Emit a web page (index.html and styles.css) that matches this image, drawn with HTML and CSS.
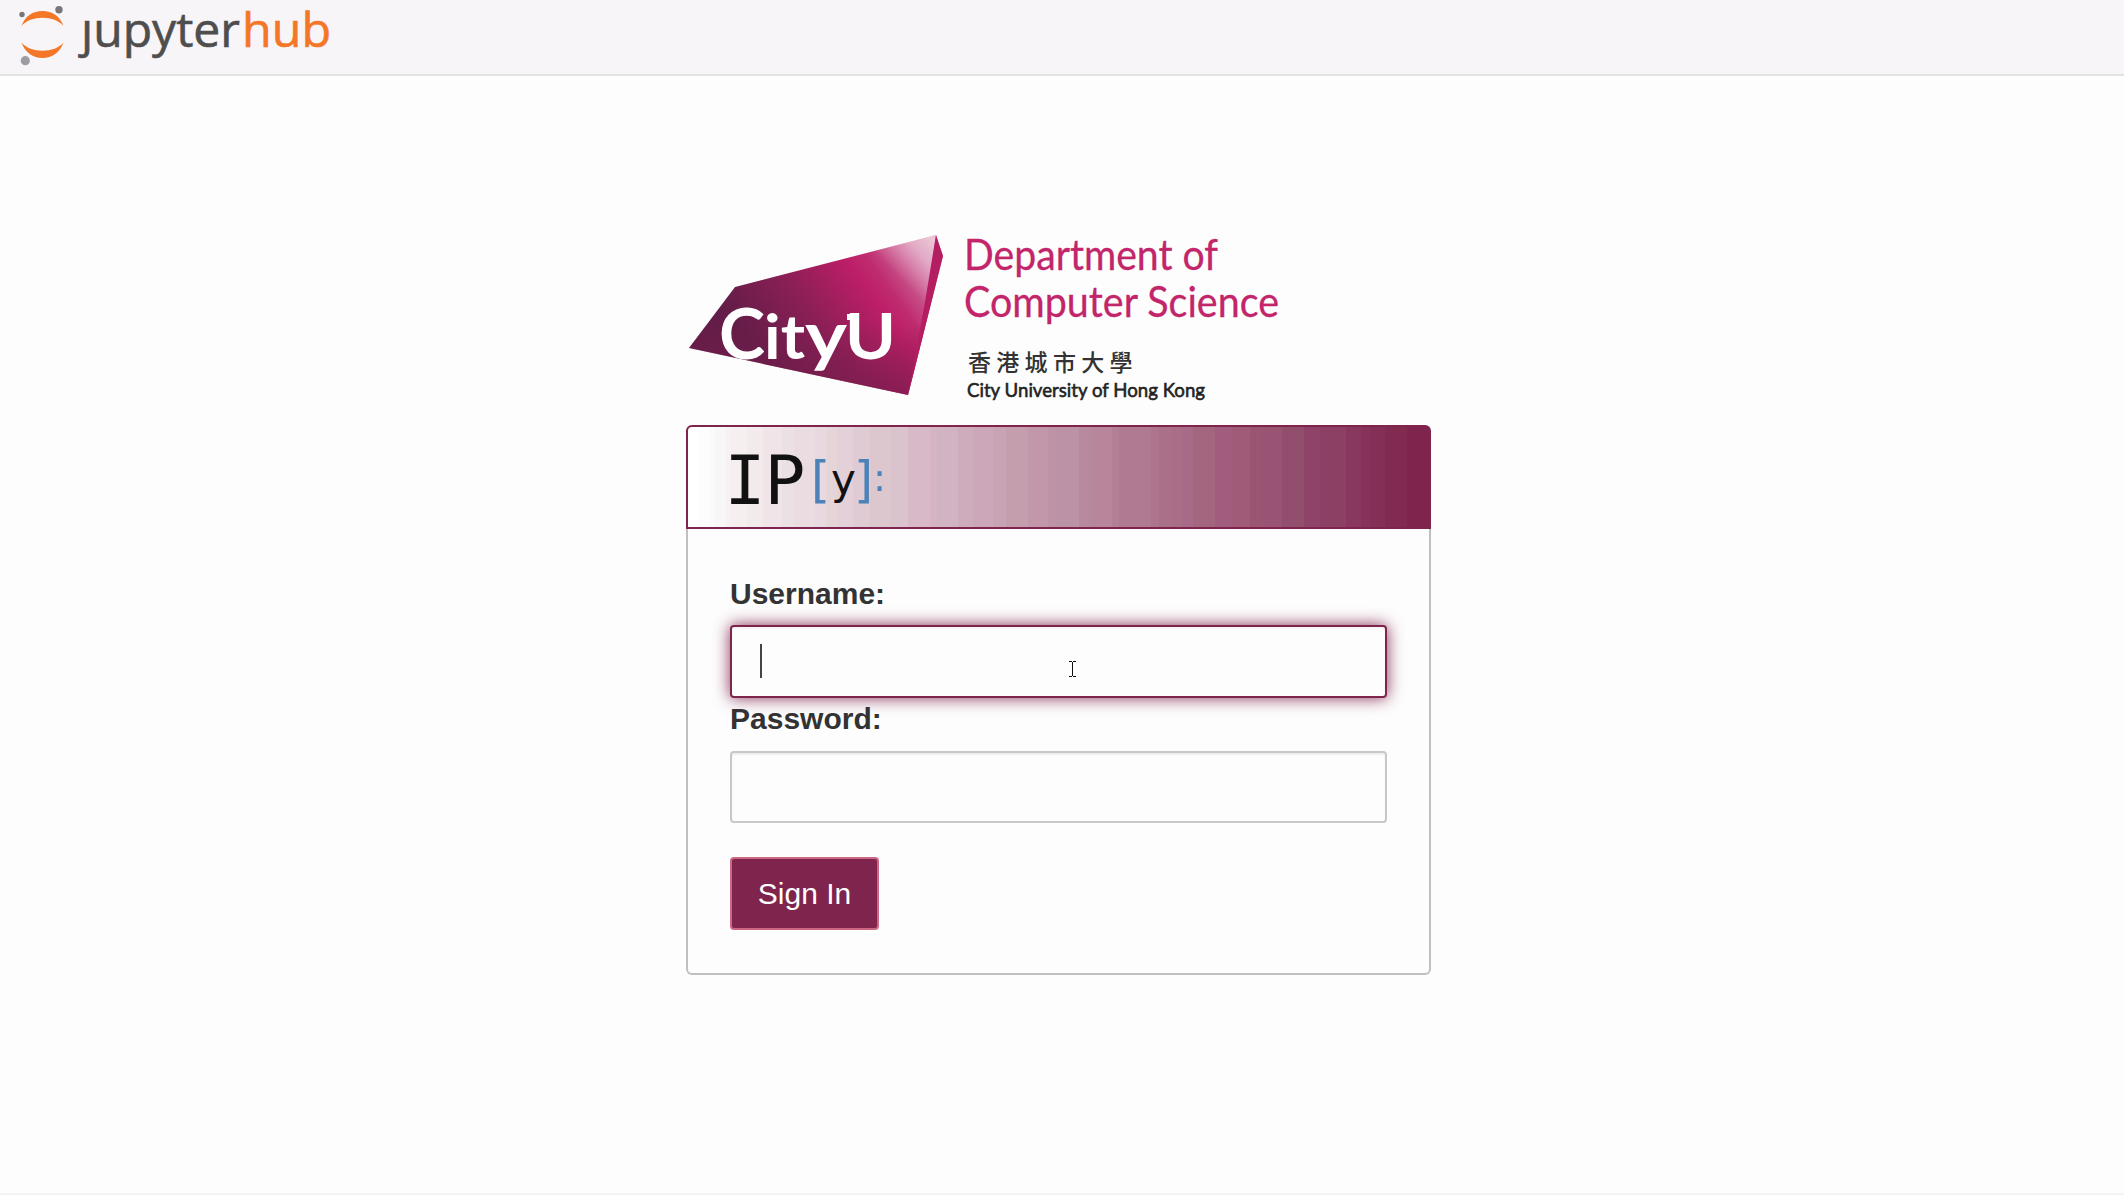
FILE: index.html
```html
<!DOCTYPE html>
<html lang="en">
<head>
<meta charset="utf-8">
<title>JupyterHub</title>
<link rel="stylesheet" href="styles.css">
</head>
<body>
<header class="topbar">
  <svg class="hub-logo" width="350" height="74" viewBox="0 0 350 74" role="img" aria-label="jupyterhub">
    <clipPath id="stem"><path d="M60 19H100V0H350V74H60Z"/></clipPath>
    <path class="orange" d="M21.5 26C25 16 33 11 42.500 11S60 16 63.500 26C59 20.500 51 17.700 42.500 17.700S26 20.500 21.500 26Z"/>
    <path class="orange" d="M21.500 42.500C25 52.500 33 58 42.500 58S60 52.500 63.500 42.500C59 48 51 50.700 42.500 50.700S26 48 21.500 42.500Z"/>
    <circle cx="22" cy="14.500" r="2.700" fill="#77767a"/>
    <circle cx="59" cy="9.800" r="3.700" fill="#77767a"/>
    <circle cx="25.300" cy="60.700" r="4.600" fill="#9c9ea3"/>
    <text class="hub-word" clip-path="url(#stem)" x="81" y="46.500" textLength="159" lengthAdjust="spacingAndGlyphs">jupyter</text>
    <text class="hub-word orange" x="242" y="46.500" textLength="89" lengthAdjust="spacingAndGlyphs">hub</text>
  </svg>
</header>
<main class="page">
  <svg class="dept-logo" width="745" height="190" viewBox="686 225 745 190" role="img" aria-label="CityU Department of Computer Science">
    <defs>
      <linearGradient id="gem" gradientUnits="userSpaceOnUse" x1="760" y1="355" x2="915" y2="245">
        <stop offset="0" stop-color="#641d48"/><stop offset=".35" stop-color="#8b1f56"/><stop offset=".66" stop-color="#bd1e67"/><stop offset=".76" stop-color="#bf2c70"/><stop offset="1" stop-color="#d47fa8"/>
      </linearGradient>
      <linearGradient id="shade" x1="0" y1="0" x2="0" y2="1">
        <stop offset=".55" stop-color="#7b1c4d" stop-opacity="0"/><stop offset="1" stop-color="#7b1c4d" stop-opacity=".65"/>
      </linearGradient>
      <linearGradient id="shine" gradientUnits="userSpaceOnUse" x1="898" y1="276" x2="934" y2="240">
        <stop offset="0" stop-color="#fff" stop-opacity="0"/><stop offset="1" stop-color="#fff" stop-opacity=".55"/>
      </linearGradient>
    </defs>
    <path d="M689 348L735 287L936 235L943 256L908 395Z" fill="url(#gem)"/>
    <path d="M689 348L735 287L936 235L943 256L908 395Z" fill="url(#shade)"/>
    <path d="M862 254L936 235L925 312Z" fill="url(#shine)"/>
    <path d="M936 235L943 256L908 395L925 302Z" fill="#b51d62"/>
    <text class="city-word city-c" x="719" y="359" textLength="46" lengthAdjust="spacingAndGlyphs">C</text>
    <text class="city-word" x="764" y="359" textLength="41" lengthAdjust="spacingAndGlyphs">it</text>
    <text class="city-word city-y" x="805" y="359" textLength="42" lengthAdjust="spacingAndGlyphs">y</text>
    <text class="city-word city-u" x="845" y="359" textLength="51" lengthAdjust="spacingAndGlyphs">U</text>
    <path d="M847 314H857V320H847Z" fill="#fff"/>
    <text class="dept" x="964" y="269.500" textLength="254" lengthAdjust="spacingAndGlyphs">Department of</text>
    <text class="dept" x="964" y="316.500" textLength="315" lengthAdjust="spacingAndGlyphs">Computer Science</text>
    <text class="uni-zh" x="968" y="371">香港城市大學</text>
    <text class="uni-en" x="967" y="396.500" textLength="238" lengthAdjust="spacingAndGlyphs">City University of Hong Kong</text>
  </svg>
  <section class="card">
    <div class="card-head">
      <svg width="200" height="100" viewBox="688 427 200 100" role="img" aria-label="IP[y]:">
        <text class="ipy"><tspan x="724.500" y="503.500">I</tspan><tspan x="764.500">P</tspan><tspan class="ipy-blue" x="811" y="496.500">[</tspan><tspan class="ipy-y" x="831" y="494">y</tspan><tspan class="ipy-blue" x="854" y="496.500">]</tspan><tspan class="ipy-colon" x="873" y="491">:</tspan></text>
      </svg>
    </div>
    <form class="login">
      <label for="user">Username:</label>
      <div class="field focused"><input id="user" type="text"><span class="caret"></span>
        <svg class="pointer" width="7" height="16" viewBox="0 0 7 16"><path d="M0 .5H3M4 .5H7M3.500 1V15M0 15.500H3M4 15.500H7" stroke="#111" fill="none"/></svg>
      </div>
      <label for="pass">Password:</label>
      <div class="field"><input id="pass" type="password"></div>
      <button type="button">Sign In</button>
    </form>
  </section>
</main>
<footer class="bottom-line"></footer>
</body>
</html>
```
FILE: styles.css
```css
* { box-sizing: border-box; }
body {
  margin: 0;
  height: 1195px;
  display: flex;
  flex-direction: column;
  overflow: hidden;
  background: #fdfdfd;
  color: #333;
  font: 30px/42px "Liberation Sans", Arial, sans-serif;
}
svg { display: block; }
.topbar { height: 76px; flex: none; background: #f8f5f9; border-bottom: 2px solid #e3e1e3; }
.hub-word { font: 47.5px "Open Sans", sans-serif; fill: #4e4e4e; stroke: #4e4e4e; stroke-width: .6px; }
.orange { fill: #f37726; }
.hub-word.orange { fill: #f37726; stroke: #f37726; }
.page { flex: 1; width: 745px; margin-left: 686px; padding-top: 149px; }
.dept-logo { margin-bottom: 10px; }
.city-word { font: 700 62px Lato, sans-serif; fill: #fff; }
.city-c { font-size: 71px; }
.city-y { font-size: 66px; }
.city-u { font-size: 63px; }
.dept { font: 42px Lato, sans-serif; fill: #c3256b; stroke: #c3256b; stroke-width: .3px; }
.uni-zh { font: 500 23px "Noto Sans CJK TC", sans-serif; letter-spacing: 5.300px; fill: #333; }
.uni-en { font: 20px Lato, sans-serif; fill: #222; stroke: #222; stroke-width: .6px; }
.card { height: 550px; border: 2px solid #c0c0c0; border-top: 0; border-radius: 6px; }
.card-head {
  height: 104px;
  margin: 0 -2px;
  border: 2px solid #7f244c;
  border-radius: 6px 6px 0 0;
  background: linear-gradient(90deg,
    #fff 0 10px, #fdfdfd 0 22px, #fafafa 0 27px, #f8f7f8 0 38px, #f7f0f5 0 43px, #f5f0ef 0 59px,
    #f3eaeb 0 75px, #f0e4e8 0 94px, #ebe0e4 0 106px, #eadce1 0 127px, #e8d8df 0 138px, #e5d5d9 0 149px,
    #e4d0d8 0 165px, #dfcbd3 0 182px, #dcc7cf 0 203px, #dbc3cd 0 220px, #d8b9c7 0 242px, #d5b5c3 0 249px,
    #d1b4c3 0 270px, #cdadbc 0 285px, #cba7b9 0 305px, #c8a3b3 0 318px, #c59eae 0 340px, #c297a9 0 360px,
    #be92a7 0 367px, #bb92a6 0 391px, #b88aa0 0 401px, #b6889c 0 405px, #b8869c 0 424px, #b37f95 0 431px,
    #b07b92 0 463px, #ac758d 0 471px, #aa7089 0 484px, #a96d88 0 494px, #a86a89 0 505px, #a4657f 0 527px,
    #a15d7e 0 544px, #9f5b78 0 562px, #9a5573 0 573px, #995373 0 594px, #924e6d 0 616px, #904368 0 632px,
    #8c4164 0 658px, #89375e 0 673px, #873359 0 682px, #842f56 0 697px, #822b51 0 719px, #7f244c 0);
}
.ipy { font: 68px "DejaVu Sans Mono", monospace; fill: #111; }
.ipy-blue { font-family: "DejaVu Sans", sans-serif; font-size: 49px; fill: #4b82b8; }
.ipy-y { font-family: "DejaVu Sans", sans-serif; font-size: 42px; }
.ipy-colon { font-family: "DejaVu Sans", sans-serif; font-size: 38px; fill: #4b82b8; }
.login { display: flex; flex-direction: column; align-items: flex-start; padding: 44px 42px 0; }
label { font-weight: 700; height: 42px; }
label[for="user"] { margin-bottom: 10px; }
label[for="pass"] { margin-bottom: 11px; }
.field { position: relative; width: 657px; height: 73px; }
input {
  display: block;
  width: 100%;
  height: 72px;
  padding: 0 28px;
  border: 2px solid #c8c8c8;
  border-radius: 4px;
  outline: 0;
  background: #fdfdfd;
  box-shadow: inset 0 2px 2px rgba(0, 0, 0, .06);
  font: inherit;
}
.focused input { height: 73px; border-color: #7f244c; box-shadow: inset 0 2px 2px rgba(0, 0, 0, .04), 0 0 16px rgba(127, 36, 76, .95); }
.caret { position: absolute; left: 30px; top: 19px; width: 2px; height: 34px; background: #444; }
.pointer { position: absolute; left: 339px; top: 36px; }
button {
  width: 149px;
  height: 73px;
  margin-top: 33px;
  padding: 0;
  border: 2px solid #cc6884;
  border-radius: 4px;
  background: #7f244c;
  color: #fff;
  font: inherit;
}
.bottom-line { height: 2px; flex: none; background: #f3f3f3; }
```
